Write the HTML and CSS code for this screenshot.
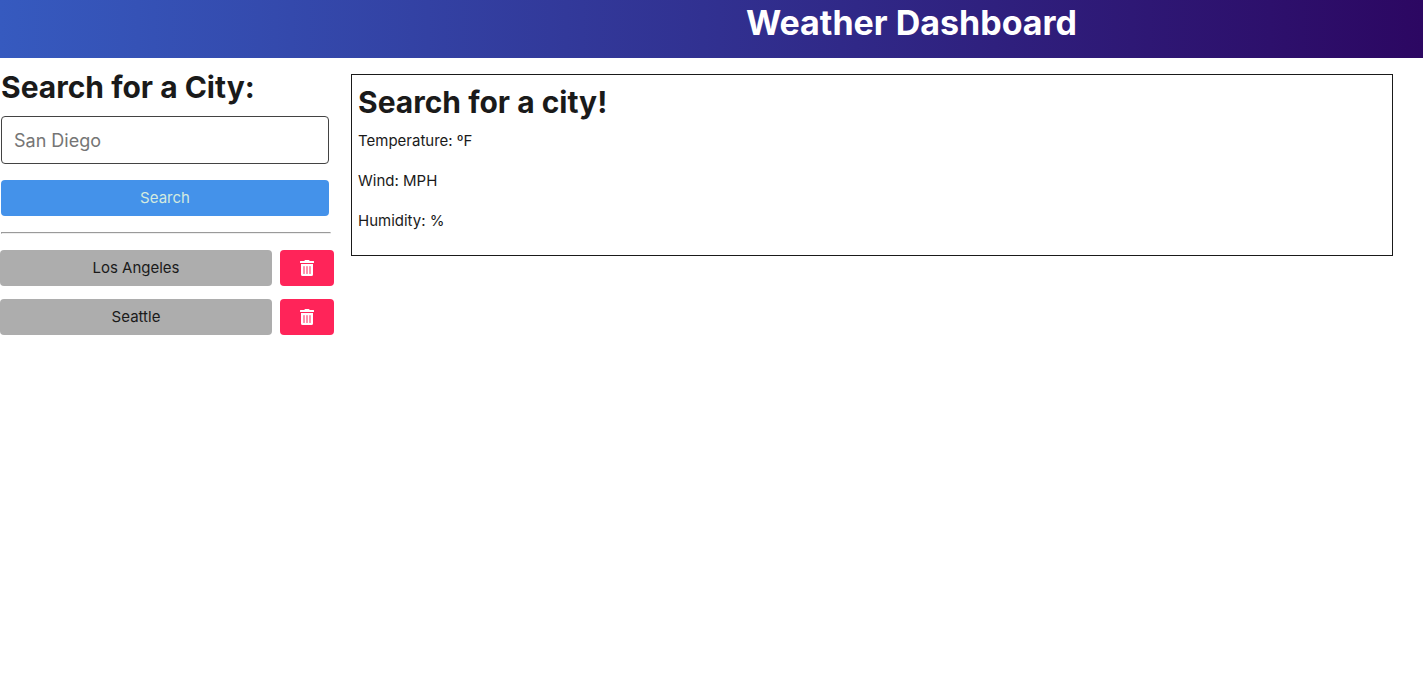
FILE: index.html
```html
<!DOCTYPE html>
<html lang="en">
<head>
<meta charset="utf-8">
<title>Weather Dashboard</title>
<link rel="stylesheet" href="styles.css">
</head>
<body>
<header class="header"><h1 class="header-title">Weather Dashboard</h1></header>
<main class="layout">
  <aside class="sidebar">
    <form class="search">
      <label class="heading" for="city">Search for a City:</label>
      <input class="city-input" id="city" type="text" placeholder="San Diego">
      <button class="button search-button" type="button">Search</button>
    </form>
    <hr class="divider">
    <ul class="history">
      <li class="history-row">
        <button class="button city-button" type="button">Los Angeles</button>
        <button class="button delete-button" type="button" aria-label="Delete Los Angeles"><svg class="trash" viewBox="0 0 448 512" aria-hidden="true"><path d="M32 464a48 48 0 0 0 48 48h288a48 48 0 0 0 48-48V128H32zm272-256a16 16 0 0 1 32 0v224a16 16 0 0 1-32 0zm-96 0a16 16 0 0 1 32 0v224a16 16 0 0 1-32 0zm-96 0a16 16 0 0 1 32 0v224a16 16 0 0 1-32 0zM432 32H312l-9.400-18.700A24 24 0 0 0 281.100 0H166.800a23.700 23.700 0 0 0-21.400 13.300L136 32H16A16 16 0 0 0 0 48v32a16 16 0 0 0 16 16h416a16 16 0 0 0 16-16V48a16 16 0 0 0-16-16z"/></svg></button>
      </li>
      <li class="history-row">
        <button class="button city-button" type="button">Seattle</button>
        <button class="button delete-button" type="button" aria-label="Delete Seattle"><svg class="trash" viewBox="0 0 448 512" aria-hidden="true"><path d="M32 464a48 48 0 0 0 48 48h288a48 48 0 0 0 48-48V128H32zm272-256a16 16 0 0 1 32 0v224a16 16 0 0 1-32 0zm-96 0a16 16 0 0 1 32 0v224a16 16 0 0 1-32 0zm-96 0a16 16 0 0 1 32 0v224a16 16 0 0 1-32 0zM432 32H312l-9.400-18.700A24 24 0 0 0 281.100 0H166.800a23.700 23.700 0 0 0-21.400 13.300L136 32H16A16 16 0 0 0 0 48v32a16 16 0 0 0 16 16h416a16 16 0 0 0 16-16V48a16 16 0 0 0-16-16z"/></svg></button>
      </li>
    </ul>
  </aside>
  <section class="current">
    <h2 class="heading current-city">Search for a city!</h2>
    <p class="reading">Temperature: ºF</p>
    <p class="reading">Wind: MPH</p>
    <p class="reading">Humidity: %</p>
  </section>
</main>
</body>
</html>
```
FILE: styles.css
```css
* { box-sizing: border-box; }
body { margin: 0; background: #fff; color: #1a1a1a; font: 15px/24px Inter, "Liberation Sans", sans-serif; }
.header { min-height: 58px; padding-left: 400px; background: linear-gradient(to right, #365abf, #2c0762); color: #fff; text-align: center; }
.header-title { margin: 0; font-size: 34px; line-height: 46px; font-weight: 700; }
.layout { display: flex; align-items: flex-start; gap: 17px; padding: 8px 30px 0 0; }
.sidebar { flex: 0 0 334px; }
.search { display: flex; flex-direction: column; padding: 0 5px 0 1px; }
.heading { margin: 0; font-size: 30px; line-height: 42px; font-weight: 700; }
.city-input { height: 48px; margin: 8px 0 16px; padding: 0 12px; border: 1px solid #434343; border-radius: 4px; font: 18px/28px Inter, "Liberation Sans", sans-serif; color: #1a1a1a; }
.city-input::placeholder { color: #757575; opacity: 1; }
.button { height: 36px; padding: 0; border: 0; border-radius: 4px; font: inherit; color: #1a1a1a; }
.search .search-button { background: #4492ea; color: #d3eadf; }
.divider { margin: 16px 3px 16px 1px; }
.history { margin: 0; padding: 0; list-style: none; display: grid; gap: 13px; }
.history-row { display: flex; gap: 8px; }
.city-button { flex: 1; background: #adadad; }
.delete-button { flex: 0 0 54px; display: flex; align-items: center; justify-content: center; background: #ff2459; }
.trash { width: 14px; height: 16px; fill: #fff; }
.current { flex: 1; margin-top: 8px; padding: 6px; border: 1px solid #1a1a1a; }
.current-city { margin-bottom: 6px; }
.reading { margin: 0 0 16px; }
```
